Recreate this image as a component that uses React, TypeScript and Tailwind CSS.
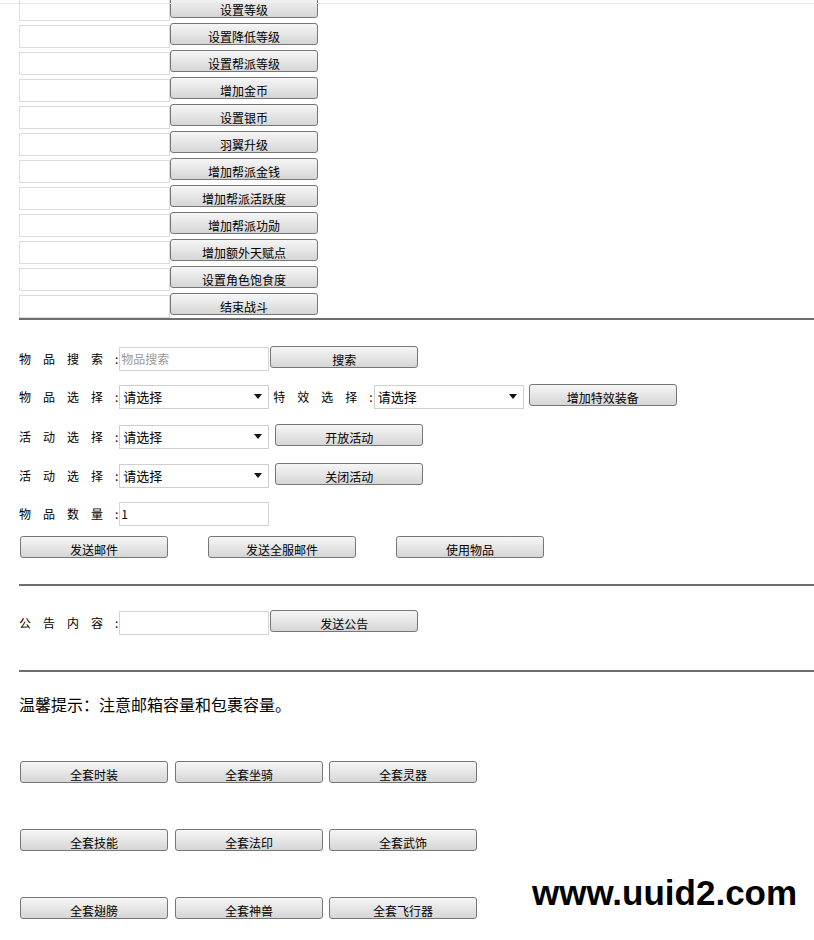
import React from "react"

const cn = "font-['Noto_Sans_CJK_SC',_'Liberation_Sans',_sans-serif]"

function Btn({ label, className = "" }: { label: string; className?: string }) {
  return (
    <button
      type="button"
      className={`flex h-[22px] w-[148px] shrink-0 items-end justify-center rounded-[3px] border border-[#767676] bg-gradient-to-b from-[#f6f6f6] via-[#e6e6e6] to-[#d6d6d6] text-[12px] leading-[15px] text-black ${className}`}
    >
      {label}
    </button>
  )
}

function Label({ text }: { text: string }) {
  return (
    <span className="flex shrink-0 items-center text-[12px] text-black">
      {text.split("").map((c, i) => (
        <span key={i} className="w-[24px] shrink-0">
          {c}
        </span>
      ))}
      <span className="pr-[1px]">:</span>
    </span>
  )
}

function TextBox({ value = "", placeholder = "" }: { value?: string; placeholder?: string }) {
  return (
    <div className="flex h-[24px] w-[150px] shrink-0 items-center border border-[#d4d4d4] bg-white px-[1px] text-[12px]">
      {value ? <span className="text-black">{value}</span> : <span className="text-[#9a9a9a]">{placeholder}</span>}
    </div>
  )
}

function Select() {
  return (
    <div className="flex h-[24px] w-[150px] shrink-0 items-center justify-between border border-[#cfcfcf] bg-white pl-[3px] pr-[6px] text-[13px] text-black">
      <span>请选择</span>
      <svg width="8" height="5" viewBox="0 0 8 5">
        <path d="M0 0h8L4 5z" fill="#111" />
      </svg>
    </div>
  )
}

const topRows = [
  "设置等级",
  "设置降低等级",
  "设置帮派等级",
  "增加金币",
  "设置银币",
  "羽翼升级",
  "增加帮派金钱",
  "增加帮派活跃度",
  "增加帮派功勋",
  "增加额外天赋点",
  "设置角色饱食度",
  "结束战斗",
]

const suits = [
  ["全套时装", "全套坐骑", "全套灵器"],
  ["全套技能", "全套法印", "全套武饰"],
  ["全套翅膀", "全套神兽", "全套飞行器"],
]

export default function App() {
  return (
    <div className={`relative h-[940px] w-[814px] overflow-hidden bg-white ${cn}`}>
      <div className="absolute left-0 top-[3px] h-px w-full bg-[#e8e8e8]" />

      <div className="ml-[19px] mt-[-4px] flex flex-col">
        {topRows.map(r => (
          <div key={r} className="flex h-[27px] items-start">
            <div className="mt-[2px] h-[23px] w-[151px] shrink-0 border border-[#dcdcdc] bg-white" />
            <Btn label={r} />
          </div>
        ))}
      </div>

      <div className="ml-[19px] mt-[-2px] h-[2px] bg-[#6e6e6e]" />

      <div className="ml-[19px] flex flex-col">
        <div className="mt-[26px] flex h-[25px] items-center">
          <Label text="物品搜索" />
          <TextBox placeholder="物品搜索" />
          <Btn label="搜索" className="mb-[4px] ml-[1px]" />
        </div>
        <div className="mt-[13px] flex h-[25px] items-center">
          <Label text="物品选择" />
          <Select />
          <span className="ml-[4px] flex items-center">
            <Label text="特效选择" />
          </span>
          <Select />
          <Btn label="增加特效装备" className="mb-[4px] ml-[5px]" />
        </div>
        <div className="mt-[15px] flex h-[25px] items-center">
          <Label text="活动选择" />
          <Select />
          <Btn label="开放活动" className="mb-[4px] ml-[6px]" />
        </div>
        <div className="mt-[14px] flex h-[25px] items-center">
          <Label text="活动选择" />
          <Select />
          <Btn label="关闭活动" className="mb-[4px] ml-[6px]" />
        </div>
        <div className="mt-[13px] flex h-[25px] items-center">
          <Label text="物品数量" />
          <TextBox value="1" />
        </div>
        <div className="mt-[10px] flex items-center gap-[40px] pl-[1px]">
          <Btn label="发送邮件" />
          <Btn label="发送全服邮件" />
          <Btn label="使用物品" />
        </div>
      </div>

      <div className="ml-[19px] mt-[26px] h-[2px] bg-[#6e6e6e]" />

      <div className="ml-[19px] mt-[24px] flex h-[25px] items-center">
        <Label text="公告内容" />
        <TextBox />
        <Btn label="发送公告" className="mb-[4px] ml-[1px]" />
      </div>

      <div className="ml-[19px] mt-[35px] h-[2px] bg-[#6e6e6e]" />

      <p className="ml-[19px] mt-[21px] text-[16px] leading-[22px] text-black">温馨提示：注意邮箱容量和包裹容量。</p>

      <div className="ml-[20px] mt-[46px] flex flex-col gap-[46px]">
        {suits.map((row, i) => (
          <div key={i} className="flex">
            <Btn label={row[0]} />
            <Btn label={row[1]} className="ml-[7px]" />
            <Btn label={row[2]} className="ml-[6px]" />
          </div>
        ))}
      </div>

      <div className="absolute left-[532px] top-[871px] font-['Liberation_Sans',_sans-serif] text-[35px] font-bold leading-[44px] text-black">
        www.uuid2.com
      </div>
    </div>
  )
}
